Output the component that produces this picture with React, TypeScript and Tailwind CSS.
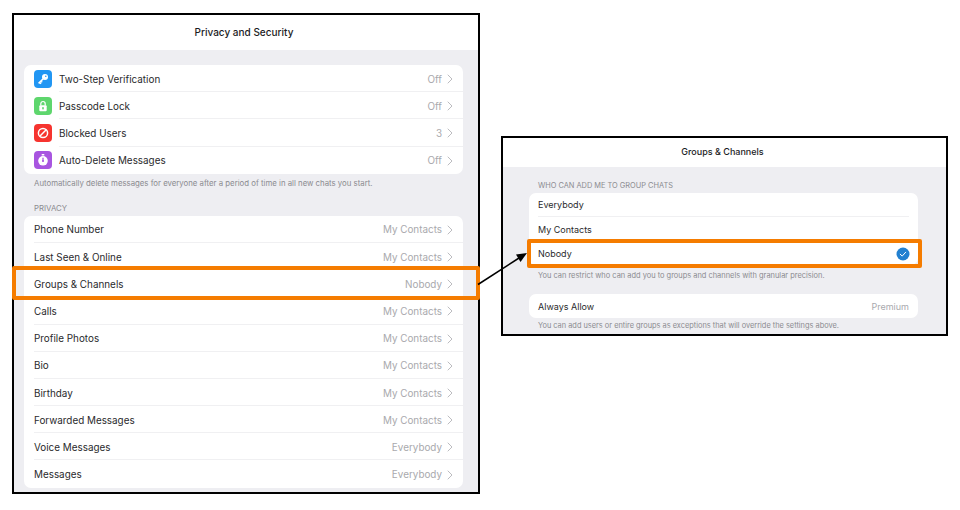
import React from "react";

const ChevronRight = () => (
  <svg width="6" height="10" viewBox="0 0 6 10" className="ml-[5px] shrink-0" fill="none" stroke="#bcbcc0" strokeWidth="1" strokeLinecap="round" strokeLinejoin="round">
    <path d="M1 1l4 4-4 4" />
  </svg>
);

const IconTile = ({ color, children }: { color: string; children: React.ReactNode }) => (
  <div className={`w-[18px] h-[18px] rounded-[4px] flex items-center justify-center shrink-0 ml-[10px] mr-[7px] ${color}`}>
    <svg width="14" height="14" viewBox="0 0 14 14" fill="none">{children}</svg>
  </div>
);

const KeyIcon = () => (
  <g>
    <circle cx="9" cy="5" r="3" fill="white" />
    <circle cx="9.8" cy="4.2" r="0.8" fill="#2196f3" />
    <path d="M7.2 6.8L2.6 11.4M3.6 10.4l1.4 1.4M5 9l1.2 1.2" stroke="white" strokeWidth="1.5" />
  </g>
);
const LockIcon = () => (
  <g>
    <path d="M4.8 6.5V4.7a2.2 2.2 0 0 1 4.4 0v1.8" stroke="white" strokeWidth="1.2" />
    <rect x="3.3" y="6.2" width="7.4" height="6" rx="1" fill="white" />
    <circle cx="7" cy="9" r="0.9" fill="#5ed66d" />
    <rect x="6.6" y="9" width="0.8" height="1.7" fill="#5ed66d" />
  </g>
);
const BlockIcon = () => (
  <g stroke="white" strokeWidth="1.5">
    <circle cx="7" cy="7" r="4.6" />
    <path d="M3.8 10.2L10.2 3.8" />
  </g>
);
const TimerIcon = () => (
  <g>
    <rect x="5.6" y="1" width="2.8" height="1.5" rx="0.5" fill="white" />
    <circle cx="7" cy="7.8" r="4.8" fill="white" />
    <path d="M7 5.2v2.8" stroke="#a855e0" strokeWidth="1.2" strokeLinecap="round" />
    <circle cx="7" cy="8" r="1" fill="#a855e0" />
  </g>
);

type RowData = { label: string; value: string; icon?: React.ReactNode };

const Row = ({ label, value, icon, last }: RowData & { last?: boolean }) => (
  <div className="h-[27.2px] flex items-center">
    {icon}
    <div className={`flex-1 h-full flex items-center pr-[10px] min-w-0 ${icon ? "" : "ml-[10px]"} ${last ? "pt-[1px]" : "pt-[2px] border-b border-[#f0f0f2]"}`}>
      <span className="flex-1 text-[#2a2a2c]">{label}</span>
      <span className="text-[#a9a9ad]">{value}</span>
      <ChevronRight />
    </div>
  </div>
);

const securityRows: RowData[] = [
  { label: "Two-Step Verification", value: "Off", icon: <IconTile color="bg-[#2196f3]"><KeyIcon /></IconTile> },
  { label: "Passcode Lock", value: "Off", icon: <IconTile color="bg-[#5ed66d]"><LockIcon /></IconTile> },
  { label: "Blocked Users", value: "3", icon: <IconTile color="bg-[#f6342f]"><BlockIcon /></IconTile> },
  { label: "Auto-Delete Messages", value: "Off", icon: <IconTile color="bg-[#a855e0]"><TimerIcon /></IconTile> },
];

const privacyRows: RowData[] = [
  { label: "Phone Number", value: "My Contacts" },
  { label: "Last Seen & Online", value: "My Contacts" },
  { label: "Groups & Channels", value: "Nobody" },
  { label: "Calls", value: "My Contacts" },
  { label: "Profile Photos", value: "My Contacts" },
  { label: "Bio", value: "My Contacts" },
  { label: "Birthday", value: "My Contacts" },
  { label: "Forwarded Messages", value: "My Contacts" },
  { label: "Voice Messages", value: "Everybody" },
  { label: "Messages", value: "Everybody" },
];

export default function App() {
  return (
    <div className="relative w-[960px] h-[510px] bg-white overflow-hidden flex items-start pl-[12px] pt-[13px] gap-[21px] text-[9.9px] font-['Inter',sans-serif]">
      {/* Left window */}
      <div className="w-[468px] h-[481px] border-2 border-black bg-[#eeeef2] flex flex-col overflow-hidden shrink-0">
        <div className="h-[35px] pr-[4px] bg-white flex items-center justify-center text-[10px] font-medium text-[#1c1c1e]">Privacy and Security</div>
        <div className="pl-[10px] pr-[15px] pt-[15px]">
          <div className="bg-white rounded-[7px] overflow-hidden">
            {securityRows.map((r, i) => (
              <Row key={r.label} {...r} last={i === securityRows.length - 1} />
            ))}
          </div>
          <div className="pl-[10px] pt-[4px] h-[18px] text-[7.8px] leading-[10px] text-[#8b8b90] whitespace-nowrap">
            Automatically delete messages for everyone after a period of time in all new chats you start.
          </div>
          <div className="pl-[10px] pt-[11px] h-[24px] text-[7.8px] leading-[10px] text-[#8b8b90]">PRIVACY</div>
          <div className="bg-white rounded-[7px] overflow-hidden">
            {privacyRows.map((r, i) => (
              <Row key={r.label} {...r} last={i === privacyRows.length - 1} />
            ))}
          </div>
        </div>
      </div>

      {/* Right window */}
      <div className="w-[447px] h-[200px] mt-[123px] border-2 border-black bg-[#eeeef2] flex flex-col overflow-hidden shrink-0">
        <div className="h-[29px] pr-[4px] pb-[1px] shrink-0 bg-white flex items-center justify-center text-[9px] font-medium text-[#1c1c1e]">Groups &amp; Channels</div>
        <div className="pl-[26px]">
          <div className="pl-[9px] pt-[14px] h-[26px] text-[7.4px] leading-[9px] text-[#8b8b90] whitespace-nowrap">WHO CAN ADD ME TO GROUP CHATS</div>
          <div className="w-[389px] bg-white rounded-[7px] text-[9px] text-[#2a2a2c]">
            <div className="h-[24px] mx-[9px] pt-[1px] flex items-center border-b border-[#f0f0f2]">Everybody</div>
            <div className="h-[24px] mx-[9px] pt-[1px] flex items-center">My Contacts</div>
            <div className="h-[24px] mx-[9px] pt-[1px] flex items-center justify-between">
              Nobody
              <svg width="14" height="14" viewBox="0 0 14 14" className="mr-[-1px]">
                <circle cx="7" cy="7" r="6.5" fill="#2280d0" />
                <path d="M4.2 7.2l2 1.9 3.5-3.9" fill="none" stroke="white" strokeWidth="1" strokeLinecap="round" strokeLinejoin="round" />
              </svg>
            </div>
          </div>
          <div className="pl-[9px] pt-[6px] h-[29px] text-[7.45px] leading-[9px] text-[#8b8b90] whitespace-nowrap">You can restrict who can add you to groups and channels with granular precision.</div>
          <div className="w-[389px] h-[24px] pt-[1px] bg-white rounded-[7px] flex items-center justify-between px-[9px] text-[9px] text-[#2a2a2c]">
            Always Allow
            <span className="text-[#a9a9ad]">Premium</span>
          </div>
          <div className="pl-[9px] pt-[3px] text-[7.4px] leading-[9px] text-[#8b8b90] whitespace-nowrap">You can add users or entire groups as exceptions that will override the settings above.</div>
        </div>
      </div>

      {/* Callout highlights */}
      <div className="absolute left-[12px] top-[266px] w-[468px] h-[34px] border-[4px] border-[#f57c00] rounded-[2px]" />
      <div className="absolute left-[527px] top-[239px] w-[395px] h-[29px] border-[4px] border-[#f57c00] rounded-[2px]" />
      <svg className="absolute left-[477px] top-[250px]" width="52" height="36" viewBox="0 0 52 36" fill="none">
        <path d="M1 34.5L42 8" stroke="black" strokeWidth="1.5" />
        <path d="M50 3L39 4.5L43.5 12Z" fill="black" />
      </svg>
    </div>
  );
}
